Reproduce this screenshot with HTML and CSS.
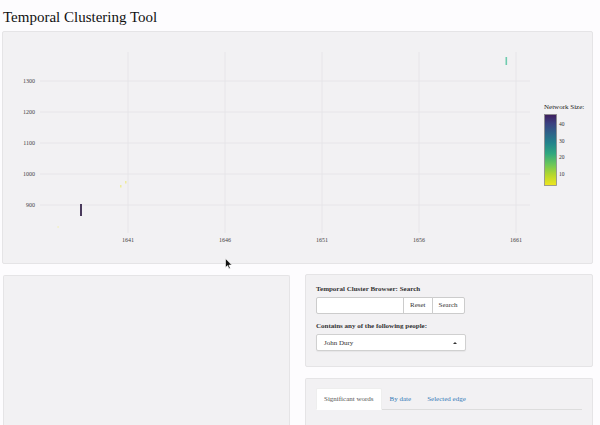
FILE: index.html
```html
<!DOCTYPE html>
<html>
<head>
<meta charset="utf-8">
<link rel="stylesheet" href="styles.css">
</head>
<body>
<h2 class="title">Temporal Clustering Tool</h2>
<div class="well plot-well">
  <svg class="plot" width="589" height="231" viewBox="3 32 589 231" xmlns="http://www.w3.org/2000/svg">
    <defs>
      <linearGradient id="viridis" x1="0" y1="1" x2="0" y2="0">
        <stop offset="0" stop-color="#f0e61e"/>
        <stop offset="0.15" stop-color="#b5d72c"/>
        <stop offset="0.3" stop-color="#6ac65a"/>
        <stop offset="0.45" stop-color="#2fa77f"/>
        <stop offset="0.6" stop-color="#22838c"/>
        <stop offset="0.75" stop-color="#2f6089"/>
        <stop offset="0.88" stop-color="#3b3f80"/>
        <stop offset="1" stop-color="#3e1d5c"/>
      </linearGradient>
    </defs>
    <g class="grid">
      <line x1="40" y1="81" x2="530" y2="81"/>
      <line x1="40" y1="112" x2="530" y2="112"/>
      <line x1="40" y1="143" x2="530" y2="143"/>
      <line x1="40" y1="174" x2="530" y2="174"/>
      <line x1="40" y1="205" x2="530" y2="205"/>
      <line x1="128" y1="52" x2="128" y2="233"/>
      <line x1="225" y1="52" x2="225" y2="233"/>
      <line x1="322" y1="52" x2="322" y2="233"/>
      <line x1="419" y1="52" x2="419" y2="233"/>
      <line x1="516" y1="52" x2="516" y2="233"/>
    </g>
    <g class="ylab">
      <text x="35" y="83">1300</text>
      <text x="35" y="114">1200</text>
      <text x="35" y="145">1100</text>
      <text x="35" y="176">1000</text>
      <text x="35" y="207">900</text>
    </g>
    <g class="xlab">
      <text x="128" y="242">1641</text>
      <text x="225" y="242">1646</text>
      <text x="322" y="242">1651</text>
      <text x="419" y="242">1656</text>
      <text x="516" y="242">1661</text>
    </g>
    <rect x="80" y="204" width="2" height="12" fill="#4a3a5c"/>
    <rect x="505.5" y="57" width="1.6" height="8" fill="#6fcbae"/>
    <rect x="120" y="185" width="1.5" height="2.5" fill="#eeec9c"/>
    <rect x="125" y="181" width="1.5" height="2.5" fill="#eeec9c"/>
    <rect x="57.5" y="226" width="1.2" height="2" fill="#f2f0c4"/>
    <text class="legtitle" x="544" y="109">Network Size:</text>
    <rect x="544.5" y="114.5" width="12" height="71" fill="url(#viridis)" stroke="#8a8a8a" stroke-width="0.8"/>
    <g class="leglab">
      <text x="559" y="126">40</text>
      <text x="559" y="142.5">30</text>
      <text x="559" y="159">20</text>
      <text x="559" y="175.5">10</text>
    </g>
  </svg>
</div>
<div class="bottom">
  <div class="well left-well"></div>
  <div class="right-col">
    <div class="well search-well">
      <label class="lbl">Temporal Cluster Browser: Search</label>
      <div class="input-group">
        <div class="text-input"></div>
        <div class="btn">Reset</div>
        <div class="btn">Search</div>
      </div>
      <label class="lbl lbl2">Contains any of the following people:</label>
      <div class="select">
        <span>John Dury</span>
        <span class="caret"></span>
      </div>
    </div>
    <div class="well tabs-well">
      <div class="tabs">
        <div class="tab active">Significant words</div>
        <div class="tab">By date</div>
        <div class="tab">Selected edge</div>
      </div>
    </div>
  </div>
</div>
<svg class="cursor" width="8" height="12" viewBox="0 0 8 12" xmlns="http://www.w3.org/2000/svg">
  <path d="M0.5 0.5 L0.5 9.5 L2.6 7.6 L4 10.8 L5.3 10.2 L3.9 7.1 L6.8 7.1 Z" fill="#111" stroke="#fff" stroke-width="0.6"/>
</svg>
</body>
</html>
```
FILE: styles.css
```css
html, body {
  margin: 0;
  padding: 0;
}
body {
  background: #fdfcfe;
  font-family: "Liberation Serif", "Times New Roman", serif;
  font-size: 7px;
  color: #333;
  width: 600px;
  height: 425px;
  overflow: hidden;
  position: relative;
}
.title {
  font-size: 15px;
  line-height: 16px;
  font-weight: normal;
  margin: 0 0 6px 3px;
  padding-top: 9px;
  color: #111;
}
.well {
  background: #f2f1f3;
  border: 1px solid #e5e4e6;
  border-radius: 2px;
  box-sizing: border-box;
}
.plot-well {
  margin-left: 2px;
  width: 591px;
  height: 233px;
}
.plot {
  display: block;
}
.grid line {
  stroke: #e4e3e6;
  stroke-width: 0.8;
}
.ylab text {
  font-family: "Liberation Serif", serif;
  font-size: 6px;
  fill: #444;
  text-anchor: end;
}
.xlab text {
  font-family: "Liberation Serif", serif;
  font-size: 6px;
  fill: #444;
  text-anchor: middle;
}
.legtitle {
  font-family: "Liberation Serif", serif;
  font-size: 7px;
  fill: #222;
}
.leglab text {
  font-family: "Liberation Serif", serif;
  font-size: 5.5px;
  fill: #333;
}
.bottom {
  display: flex;
  gap: 15px;
  margin-top: 10px;
  padding-left: 3px;
}
.left-well {
  width: 287px;
  height: 150px;
  margin-top: 1px;
  border-bottom-width: 0;
  border-radius: 2px 2px 0 0;
}
.right-col {
  width: 288px;
  display: flex;
  flex-direction: column;
  gap: 11px;
}
.search-well {
  height: 93px;
  padding: 9px 10px;
}
.lbl {
  display: block;
  font-weight: bold;
  line-height: 10px;
  margin-bottom: 3px;
  color: #333;
}
.lbl2 {
  margin-top: 7px;
}
.input-group {
  display: flex;
  height: 17px;
}
.text-input {
  width: 88px;
  background: #fff;
  border: 1px solid #ccc;
  border-radius: 2px 0 0 2px;
  box-sizing: border-box;
}
.btn {
  background: #fff;
  border: 1px solid #ccc;
  margin-left: -1px;
  padding: 0 6px;
  line-height: 15px;
  color: #333;
}
.btn:last-child {
  border-radius: 0 2px 2px 0;
}
.select {
  width: 150px;
  height: 17px;
  box-sizing: border-box;
  background: #fff;
  border: 1px solid #d0d0d0;
  border-radius: 2px;
  display: flex;
  justify-content: space-between;
  align-items: center;
  padding: 0 8px 0 7px;
  box-shadow: 0 1px 1px rgba(0,0,0,0.05);
}
.caret {
  width: 0;
  height: 0;
  border-left: 2px solid transparent;
  border-right: 2px solid transparent;
  border-bottom: 2px solid #333;
}
.tabs-well {
  height: 47px;
  padding: 9px 10px;
  border-bottom-width: 0;
  border-radius: 2px 2px 0 0;
}
.tabs {
  display: flex;
  border-bottom: 1px solid #ddd;
  gap: 0;
}
.tab {
  padding: 5px 7px;
  line-height: 10px;
  color: #337ab7;
  margin-bottom: -1px;
  border: 1px solid transparent;
  border-radius: 2px 2px 0 0;
}
.tab.active {
  background: #fff;
  color: #555;
  border-color: #eee #eee transparent #eee;
}
.cursor {
  position: absolute;
  left: 225px;
  top: 258px;
}
```
